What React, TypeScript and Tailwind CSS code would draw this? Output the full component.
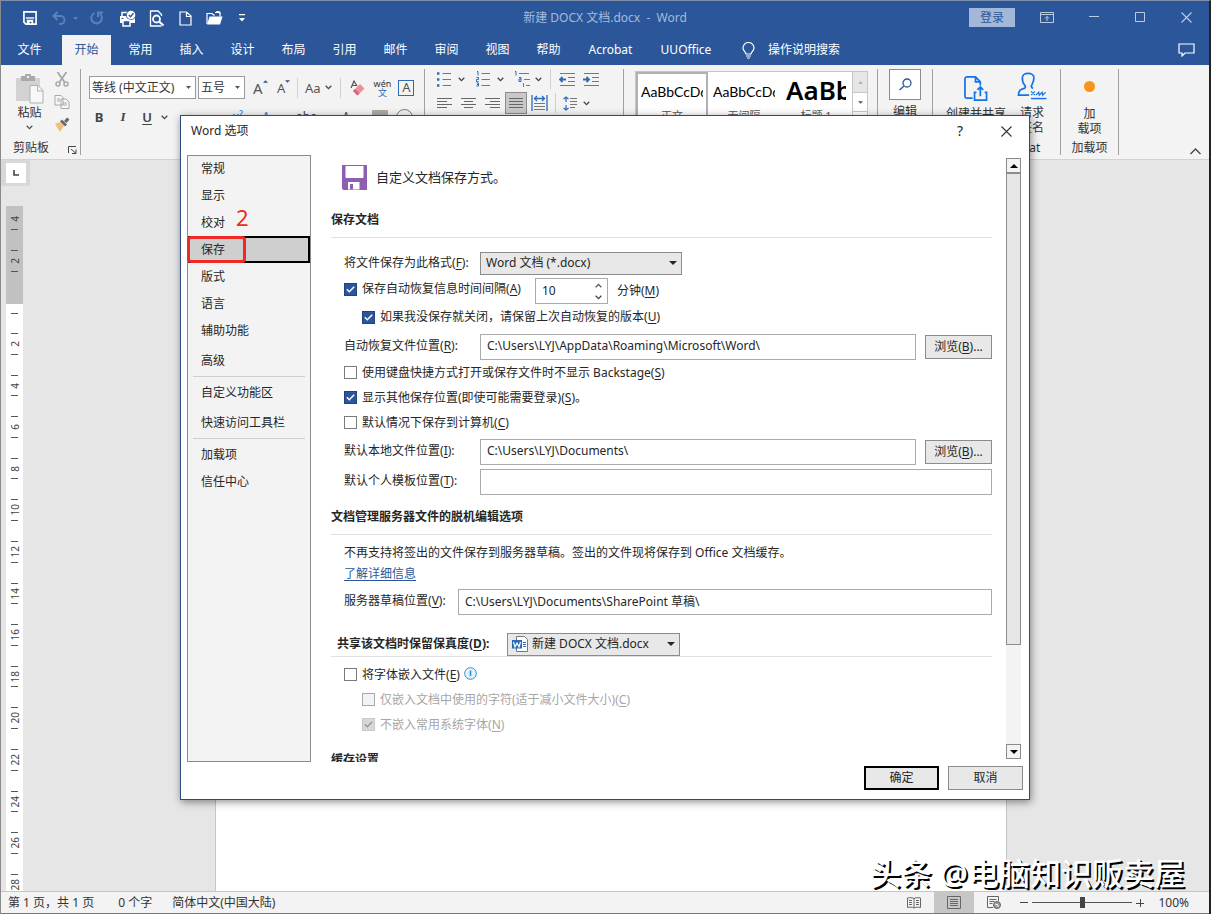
import React, { useState } from 'react';
import clsx from 'clsx';

type IconProps = { className?: string };

/* ---------- small glyphs ---------- */

function Chevron({ className = 'text-[#444]' }: IconProps) {
  return (
    <svg className={clsx('shrink-0', className)} width="7" height="5" viewBox="0 0 7 5" fill="none" stroke="currentColor" strokeWidth="1.3">
      <path d="M.7.8 3.5 3.6 6.3.8" />
    </svg>
  );
}

function Triangle({ className, up = false }: IconProps & { up?: boolean }) {
  return (
    <svg className={clsx('shrink-0', className)} width="8" height="4" viewBox="0 0 8 4" fill="currentColor">
      <path d={up ? 'M0 4 4 0 8 4Z' : 'M0 0h8L4 4Z'} />
    </svg>
  );
}

function SmallTriangle({ className = 'text-[#555]' }: IconProps) {
  return (
    <svg className={clsx('shrink-0', className)} width="5" height="3" viewBox="0 0 5 3" fill="currentColor">
      <path d="M0 0h5L2.5 3Z" />
    </svg>
  );
}

/* ---------- title bar ---------- */

function QuickAccess() {
  const btn = 'flex h-6 items-center justify-center';
  return (
    <div className="flex items-center pl-[15px] text-white">
      <button aria-label="保存" className={clsx(btn, 'w-7')}>
        <svg width="14" height="14" viewBox="0 0 15 15" fill="none">
          <path d="M1 1h13v13H3L1 12Z" stroke="currentColor" strokeWidth="1.8" />
          <path d="M3 7.5h9" stroke="currentColor" strokeWidth="1.5" />
          <path d="M4 9.5h7V14H9v-2.5H7V14H4Z" fill="currentColor" />
        </svg>
      </button>
      <button aria-label="撤消" className={clsx(btn, 'ml-[5px] w-5 text-[#5c80b8]')}>
        <svg width="14" height="14" viewBox="0 0 14 14" fill="none" stroke="currentColor" strokeWidth="2">
          <path d="M5.5 1 1.5 5l4 4M2 5h6.5a4 4 0 0 1 0 8H7" />
        </svg>
      </button>
      <button aria-label="撤消选项" className={clsx(btn, 'w-3')}>
        <SmallTriangle className="text-[#5c80b8]" />
      </button>
      <button aria-label="重复" className={clsx(btn, 'ml-1 w-6 text-[#5c80b8]')}>
        <svg width="14" height="14" viewBox="0 0 14 14" fill="none" stroke="currentColor" strokeWidth="2">
          <path d="M4.5 2.2A5.3 5.3 0 1 0 10 3M8 6V1.5h5" />
        </svg>
      </button>
      <button aria-label="快速打印" className={clsx(btn, 'ml-[6px] w-6')}>
        <svg width="17" height="17" viewBox="0 0 17 17" fill="none">
          <path d="M1 6h11l4 1v6H1Z" fill="currentColor" />
          <path d="M3 6V2.5h6" stroke="currentColor" strokeWidth="1.5" />
          <circle cx="12" cy="5" r="5" fill="#2b579a" />
          <circle cx="12" cy="5" r="4.3" fill="currentColor" />
          <path d="m9.8 5 1.7 1.7 3-3.4" stroke="#2b579a" strokeWidth="1.3" />
          <path d="M4 10.5h7V16H4Z" fill="#2b579a" stroke="currentColor" strokeWidth="1.5" />
          <path d="M2.5 8.5h2" stroke="#2b579a" />
        </svg>
      </button>
      <button aria-label="打印预览" className={clsx(btn, 'ml-1 w-7')}>
        <svg width="16" height="17" viewBox="0 0 16 17" fill="none" stroke="currentColor">
          <path d="M12.5 6V4.5L9 1H1.5v15h11" strokeWidth="1.3" />
          <circle cx="7.5" cy="9" r="3.5" strokeWidth="1.8" />
          <path d="m10 11.5 4.5 4" strokeWidth="2.2" />
        </svg>
      </button>
      <button aria-label="新建" className={clsx(btn, 'w-7')}>
        <svg width="13" height="15" viewBox="0 0 13 15" fill="none" stroke="currentColor" strokeWidth="1.2">
          <path d="M1 1h6.5L12 5v9H1ZM7.5 1v4.5H12" />
        </svg>
      </button>
      <button aria-label="打开" className={clsx(btn, 'ml-px w-7')}>
        <svg width="17" height="14" viewBox="0 0 17 14" fill="none">
          <path d="M1 13V2.5h5L7.5 4H9M14 5.5v-4H9" stroke="currentColor" strokeWidth="1.2" />
          <path d="M3.5 5.5h13L14 13.5H1Z" fill="currentColor" />
          <path d="m10 1 3-1 1 3" stroke="currentColor" />
        </svg>
      </button>
      <button aria-label="自定义快速访问工具栏" className={clsx(btn, 'w-7')}>
        <svg width="6" height="8" viewBox="0 0 6 8">
          <path d="M0 0h6v1.3H0ZM0 4h6L3 7.5Z" fill="currentColor" />
        </svg>
      </button>
    </div>
  );
}

function TitleBar() {
  return (
    <header className="relative flex h-[34px] shrink-0 items-center justify-between bg-[#2b579a]">
      <QuickAccess />
      <h1 className="pointer-events-none absolute inset-x-0 text-center text-[12px] font-normal whitespace-pre text-[#a5bbdd]">
        新建 DOCX 文档.docx  -  Word
      </h1>
      <div className="flex items-center pb-[2px] text-[#bccbe4]">
        <button className="mr-[10px] h-[19px] w-[46px] bg-[#a3b8d9] text-[12px] leading-[19px] text-[#2b579a]">登录</button>
        <button aria-label="功能区显示选项" className="flex h-8 w-[46px] items-center justify-center pr-[2px]">
          <svg width="14" height="11" viewBox="0 0 14 11" fill="none" stroke="currentColor">
            <path d="M.5.5h13v10H.5ZM.5 2.5h13M7 9V4.5M5 6.5l2-2 2 2" />
          </svg>
        </button>
        <button aria-label="最小化" className="flex h-8 w-[46px] items-center justify-center">
          <svg width="10" height="2" viewBox="0 0 10 2" stroke="currentColor"><path d="M0 .5h10" /></svg>
        </button>
        <button aria-label="最大化" className="flex h-8 w-[46px] items-center justify-center">
          <svg width="10" height="10" viewBox="0 0 10 10" fill="none" stroke="currentColor"><path d="M.5.5h9v9h-9Z" /></svg>
        </button>
        <button aria-label="关闭" className="flex h-8 w-[46px] items-center justify-center">
          <svg width="11" height="11" viewBox="0 0 11 11" stroke="currentColor" strokeWidth="1.1"><path d="m.5.5 10 10M10.5.5l-10 10" /></svg>
        </button>
      </div>
    </header>
  );
}

function Tabs() {
  const tab = 'flex h-[30px] w-[51px] items-center justify-center';
  return (
    <nav className="flex h-[30px] shrink-0 items-center bg-[#2b579a] pr-[9px] text-[12px] text-white">
      <button className="mr-1 flex h-[30px] w-[57px] items-center justify-center">文件</button>
      <button className="mr-1 flex h-[30px] w-[49px] items-center justify-center bg-[#f3f3f3] text-[#2b579a]">开始</button>
      {['常用', '插入', '设计', '布局', '引用', '邮件', '审阅', '视图', '帮助'].map((t) => (
        <button key={t} className={tab}>{t}</button>
      ))}
      <button className="flex h-[30px] w-[73px] items-center justify-center">Acrobat</button>
      <button className="flex h-[30px] w-[78px] items-center justify-center">UUOffice</button>
      <button className="ml-[17px] flex h-[30px] items-center gap-[13px]">
        <svg width="13" height="17" viewBox="0 0 13 17" fill="none" stroke="currentColor" strokeWidth="1.2">
          <path d="M4 12c0-2-3-3-3-6a5.4 5.4 0 0 1 11 0c0 3-3 4-3 6ZM4 14h5M5 16h3" />
        </svg>
        操作说明搜索
      </button>
      <button aria-label="批注" className="ml-auto flex h-[30px] w-7 items-center justify-center">
        <svg width="17" height="14" viewBox="0 0 17 14" fill="none" stroke="currentColor" strokeWidth="1.2">
          <path d="M1 1h15v9H7l-3 3v-3H1Z" />
        </svg>
      </button>
    </nav>
  );
}

/* ---------- ribbon ---------- */

function ClipboardGroup() {
  return (
    <section className="flex w-[80px] shrink-0 flex-col border-r border-[#a0a0a0]">
      <div className="flex flex-1">
        <button className="flex w-[53px] flex-col items-center pt-[5px] pl-[4px] text-[12px] leading-[16px]">
          <svg width="28" height="31" viewBox="0 0 28 31" fill="none">
            <path d="M0 4h24v23H0Z" fill="#d2d2d2" />
            <path d="M5 2h4a3 3 0 0 1 6 0h4v5H5Z" fill="#a9a9a9" />
            <circle cx="12" cy="3" r="1.2" fill="#f3f3f3" />
            <path d="M14 11.5h8l5 5V29H14Z" fill="#f7f7f7" stroke="#b0b0b0" />
            <path d="M21.5 11.5V17H27" stroke="#b0b0b0" />
          </svg>
          粘贴
          <Chevron className="mt-1 text-[#555]" />
        </button>
        <div className="flex flex-col items-center gap-2 pt-[3px]">
          <button aria-label="剪切">
            <svg width="14" height="15" viewBox="0 0 14 15" fill="none" stroke="#a8a8a8" strokeWidth="1.8">
              <path d="m2.5 0 7 10M11.5 0l-7 10" />
              <circle cx="3" cy="12" r="2" strokeWidth="1.5" /><circle cx="11" cy="12" r="2" strokeWidth="1.5" />
            </svg>
          </button>
          <button aria-label="复制">
            <svg width="16" height="14" viewBox="0 0 16 14" fill="#f7f7f7" stroke="#a8a8a8">
              <path d="M1 .5h6l2 2V10H1ZM7 4h5l3 3v6.5H7ZM3 4h3M3 6h3M9 8h4M9 10h4" />
            </svg>
          </button>
          <button aria-label="格式刷">
            <svg width="16" height="15" viewBox="0 0 16 15">
              <path d="m1 7 5-2 4 4-4 6Z" fill="#f2c078" />
              <path d="m6 4.5 2-2 5 5-2 2Z" fill="#686868" />
              <path d="m10 4 3-3.500 2.500 2L12.500 6Z" fill="#686868" />
            </svg>
          </button>
        </div>
      </div>
      <div className="flex items-center gap-[19px] pl-3 text-[12px] leading-[14px]">
        剪贴板
        <svg className="mt-1 shrink-0" width="9" height="8" viewBox="0 0 9 8" fill="none" stroke="#444">
          <path d="M.5 7V.5H8M3 3l5 4.500M8 3.500v4H4" />
        </svg>
      </div>
    </section>
  );
}

function FontGroup() {
  const low = 'text-center text-[12px] leading-[20px]';
  return (
    <section className="flex w-[344px] shrink-0 flex-col gap-2 border-r border-[#a0a0a0] pt-[7px] pl-2">
      <div className="flex items-center">
        <button className="mr-[2px] flex h-[23px] w-[107px] items-center justify-between border border-[#9a9a9a] bg-white pr-1 pl-[2px] text-[12px]">
          等线 (中文正文) <SmallTriangle />
        </button>
        <button className="flex h-[23px] w-[47px] items-center justify-between border border-[#9a9a9a] bg-white pr-1 pl-[2px] text-[12px]">
          五号 <SmallTriangle />
        </button>
        <div className="ml-2 flex items-center text-[15px] leading-[20px] text-[#555]">
          <button className="flex w-6 items-start">A<Triangle up className="mt-[2px] h-[3px] w-[5px] text-[#2b579a]" /></button>
          <button className="flex w-5 items-start text-[13px]">A<Triangle className="mt-[2px] h-[3px] w-[5px] text-[#2b579a]" /></button>
          <span className="h-5 border-r border-[#d0d0d0]" />
          <button className="ml-[7px] flex items-center gap-1 text-[13px]">Aa <Chevron /></button>
          <span className="ml-2 h-5 border-r border-[#d0d0d0]" />
          <button aria-label="清除所有格式" className="ml-[9px]">
            <svg width="16" height="16" viewBox="0 0 16 16" fill="none">
              <path d="m1 8 3-7 3 5M2.500 5.500h4" stroke="#555" strokeWidth="1.2" />
              <path d="m3 11 7-7 4.500 4.500-7 7Z" fill="#ee8d9b" />
              <path d="m3 11 2-2 4.500 4.500-2 2Z" fill="#d96577" />
            </svg>
          </button>
          <button className="ml-2 flex flex-col items-center text-[9px] leading-[9px] text-[#333]">wén<span className="text-[#2b6cb8]">文</span></button>
          <button className="ml-[7px] flex h-[16px] w-[16px] items-center justify-center border border-[#2b6cb8] text-[13px] leading-none">A</button>
        </div>
      </div>
      <div className="flex h-5 items-center text-[13px] leading-[20px] text-[#444]">
        <button className="w-6 pr-1 font-bold">B</button>
        <button className="w-6 pr-1 font-['Liberation_Serif'] font-bold italic">I</button>
        <button className="w-6 pr-1 font-semibold underline underline-offset-2">U</button>
        <Chevron />
        <button className={clsx(low, 'ml-[58px] w-6 text-[#2b6cb8]')}>x²</button>
        <button className={clsx(low, 'ml-1 w-6 text-[#2b6cb8]')}>A</button>
        <button className={clsx(low, 'ml-4 w-6')}>abc</button>
        <button className={clsx(low, 'ml-4 w-6')}>A</button>
        <span className="mt-[2px] ml-[14px] h-4 w-4 shrink-0 bg-[#aaa]" />
        <button aria-label="带圈字符" className="ml-2 size-[17px] shrink-0 rounded-full border border-[#777]" />
      </div>
    </section>
  );
}

function Lines({ rows, className = 'text-[#666]' }: { rows: number[][]; className?: string }) {
  return (
    <svg className={clsx('shrink-0', className)} width="16" height="13" viewBox="0 0 16 13" stroke="currentColor">
      {rows.map(([a, b], i) => <path key={i} d={`M${a} ${i * 3 + 1.5}H${b}`} />)}
    </svg>
  );
}

function ListIcon({ kind }: { kind: 'bullet' | 'number' | 'multi' }) {
  return (
    <svg className="shrink-0" width="17" height="16" viewBox="0 0 17 16" fill="none" stroke="#777">
      {kind !== 'multi' && <path d="M5.5 2.500H14M5.5 8.500H14M5.5 14.500H14" />}
      {kind === 'bullet' && <path d="M0 2.500h2.400M0 8.500h2.400M0 14.500h2.400" stroke="#2b6cb8" strokeWidth="2.4" />}
      {kind === 'number' && <path d="M1 .5h1v4M.5 6.500h2v2h-2v2h2M.5 12h2v3h-2M1 13.500h1" stroke="#2b6cb8" />}
      {kind === 'multi' && (
        <>
          <path d="M5 2.500h10M10 8.500h6M12 14.500h4" />
          <path d="M1 .5h1v4M5 6.500h2v4H5V8h2" stroke="#2b6cb8" />
          <path d="M9.500 12v4" />
        </>
      )}
    </svg>
  );
}

function IndentIcon({ flip = false }: { flip?: boolean }) {
  return (
    <svg className="shrink-0" width="17" height="13" viewBox="0 0 17 13" fill="none" stroke="#777">
      <path d="M1 .5h15M9 4.500h7M9 8.500h7M1 12.500h15" />
      <path d={flip ? 'M0 6.500h6M3.500 4 6 6.500 3.500 9' : 'M7 6.500H1M3.500 4 1 6.500 3.500 9'} stroke="#2b6cb8" strokeWidth="1.8" />
    </svg>
  );
}

function ParagraphGroup() {
  return (
    <section className="flex w-[199px] shrink-0 flex-col gap-1 border-r border-[#a0a0a0] pt-[1px] pl-3">
      <div className="flex h-[18px] items-center">
        <ListIcon kind="bullet" /><Chevron className="ml-1 text-[#444]" />
        <span className="w-[11px]" />
        <ListIcon kind="number" /><Chevron className="ml-1 text-[#444]" />
        <span className="w-[10px]" />
        <ListIcon kind="multi" /><Chevron className="ml-1 text-[#444]" />
        <span className="mx-2 h-5 border-r border-[#d0d0d0]" />
        <IndentIcon /><span className="w-[7px]" /><IndentIcon flip />
      </div>
      <div className="flex h-[22px] items-center">
        <Lines rows={[[0, 15], [0, 10], [0, 15], [0, 10]]} />
        <span className="w-2" />
        <Lines rows={[[0, 15], [3, 12], [0, 15], [3, 12]]} />
        <span className="w-2" />
        <Lines rows={[[0, 15], [5, 15], [0, 15], [5, 15]]} />
        <span className="ml-1 flex h-[22px] w-[22px] items-center justify-center border border-[#8c8c8c] bg-[#c8c8c8]">
          <Lines rows={[[1, 15], [1, 15], [1, 15], [1, 15]]} />
        </span>
        <svg className="ml-1" width="17" height="17" viewBox="0 0 17 17" fill="none" stroke="#777">
          <path d="M3 8.500h11M3 11.500h11M3 14.500h11" />
          <path d="M1 0v16M16 0v16M4 3.500h9M6 1 3.500 3.500 6 6M11 1l2.500 2.500L11 6" stroke="#2b6cb8" strokeWidth="1.3" />
        </svg>
        <span className="mx-[7px] h-5 border-r border-[#d0d0d0]" />
        <svg width="14" height="15" viewBox="0 0 14 15" fill="none" stroke="#777">
          <path d="M7 2.500h7M7 5.500h7M7 8.500h7M7 11.500h5" />
          <path d="M3 1v5M.5 3 3 1l2.500 2M3 9v5M.5 12 3 14l2.500-2" stroke="#2b6cb8" strokeWidth="1.2" />
        </svg>
        <Chevron className="ml-[6px] text-[#444]" />
      </div>
    </section>
  );
}

function StylesGroup() {
  return (
    <section className="flex w-[254px] shrink-0 border-r border-[#a0a0a0] pt-[2px] pl-[11px]">
      <div className="flex h-[64px] w-[233px] border border-[#c6c6c6] bg-white text-[11px] text-[#555]">
        <button className="flex w-[72px] shrink-0 flex-col overflow-hidden border-2 border-[#b0b0b0] px-[3px] text-left">
          <span className="h-8 w-full overflow-hidden font-[Lato] text-[14px] leading-[36px] text-black">AaBbCcDd</span>
          <span className="w-full text-center leading-[20px]">正文</span>
        </button>
        <button className="flex w-[72px] shrink-0 flex-col overflow-hidden px-[5px] pt-[2px] text-left">
          <span className="h-8 w-full overflow-hidden font-[Lato] text-[14px] leading-[36px] text-black">AaBbCcDd</span>
          <span className="w-full text-center leading-[20px] whitespace-nowrap">无间隔</span>
        </button>
        <button className="flex w-[72px] shrink-0 flex-col overflow-hidden px-[6px] pt-[2px] text-left">
          <span className="h-8 w-full overflow-hidden text-[26px] leading-[32px] font-semibold text-black">AaBb</span>
          <span className="w-full text-center leading-[20px] whitespace-nowrap">标题 1</span>
        </button>
        <div className="flex flex-1 flex-col border-l border-[#c6c6c6]">
          <button aria-label="上一行" className="flex h-[20px] items-center justify-center bg-[#e6e6e6] text-[#aaa]"><Triangle up className="h-[3px] w-[5px]" /></button>
          <button aria-label="下一行" className="flex h-[20px] items-center justify-center border-y border-[#c6c6c6] text-[#555]"><Triangle className="h-[3px] w-[5px]" /></button>
          <button aria-label="其他" className="flex-1" />
        </div>
      </div>
    </section>
  );
}

function Ribbon() {
  return (
    <div className="flex h-[95px] shrink-0 border-b border-[#d2d2d2] bg-[#f3f3f3] pt-1 pb-1 text-[#333]">
      <ClipboardGroup />
      <FontGroup />
      <ParagraphGroup />
      <StylesGroup />
      <section className="flex w-[55px] shrink-0 justify-center border-r border-[#a0a0a0]">
        <button className="flex flex-col items-center text-[12px]">
          <span className="flex h-[31px] w-[32px] items-center justify-center border border-[#8c8c8c] bg-white">
            <svg width="13" height="13" viewBox="0 0 13 13" fill="none" stroke="#2b579a" strokeWidth="1.3">
              <circle cx="8" cy="5" r="4" /><path d="m5 8-4.500 4" />
            </svg>
          </span>
          <span className="pt-[3px] leading-[18px]">编辑</span>
        </button>
      </section>
      <section className="flex w-[128px] shrink-0 flex-col border-r border-[#a0a0a0] text-[12px] leading-[15px]">
        <div className="flex flex-1">
          <button className="flex w-[86px] flex-col items-center gap-[5px] pt-[7px]">
            <svg width="24" height="25" viewBox="0 0 25 26" fill="none" stroke="#1473e6" strokeWidth="1.8">
              <path d="M9 23H3a2 2 0 0 1-2-2V3a2 2 0 0 1 2-2h9l5 5v4M12 1v5h5" />
              <path d="M13 17h-2v8h12.500v-8h-2M17 21v-9M14 14.500l3-3 3 3" />
            </svg>
            创建并共享
          </button>
          <button className="-ml-1 flex w-[40px] flex-col items-center gap-[5px] pt-[3px] pr-[6px]">
            <svg width="32" height="28" viewBox="0 0 32 29" fill="none" stroke="#1473e6" strokeWidth="1.8">
              <path d="M13 24H2c0-5 2-6 6-7 2-1 1-3 0-4-2-2-2-5-2-7 0-6 12-6 12 0 0 3-1 5-2 7-1 1-1 3 1 4" />
              <path d="M15 27.500h16" strokeWidth="1.5" />
              <path d="m15 20 4 4M19 20l-4 4M20 24l3-3 .5 3 3-3 .5 3 3-3" strokeWidth="1.2" />
            </svg>
            <span>请求<br />签名</span>
          </button>
        </div>
        <span className="pl-[44px] text-center leading-[14px]">Acrobat</span>
      </section>
      <section className="flex w-[58px] shrink-0 flex-col items-center border-r border-[#a0a0a0] text-[12px] leading-[15px]">
        <button className="flex flex-1 flex-col items-center pt-3">
          <svg width="11" height="11" viewBox="0 0 12 12"><circle cx="6" cy="6" r="6" fill="#f7941e" /></svg>
          <span className="pt-[14px]">加<br />载项</span>
        </button>
        <span className="leading-[14px]">加载项</span>
      </section>
      <button aria-label="折叠功能区" className="mr-2 ml-auto self-end">
        <svg width="11" height="7" viewBox="0 0 11 7" fill="none" stroke="#444" strokeWidth="1.3"><path d="m.5 6 5-5 5 5" /></svg>
      </button>
    </div>
  );
}

/* ---------- document area ---------- */

function Tick() {
  return <span className="h-px w-[7px] shrink-0 bg-[#555]" />;
}

function RulerNumber({ n }: { n: number }) {
  return <span className="rotate-180 text-[10px] leading-[14px] [writing-mode:vertical-rl]">{n}</span>;
}

function Ruler() {
  const marks = Array.from({ length: 14 }, (_, i) => (i + 1) * 2);
  return (
    <div className="ml-[5px] flex w-[17px] flex-1 flex-col overflow-hidden bg-white text-[#444]">
      <div className="flex h-[98px] shrink-0 flex-col items-center bg-[#c1c1c1]">
        <div className="flex h-[34px] flex-col items-center justify-end gap-[7px] pb-[10px]"><RulerNumber n={4} /><Tick /></div>
        <div className="flex h-[42px] flex-col items-center justify-between py-[10px]"><Tick /><RulerNumber n={2} /><Tick /></div>
        <div className="pt-[10px]"><Tick /></div>
      </div>
      <div className="flex h-[19px] shrink-0 flex-col items-center pt-[9px]"><Tick /></div>
      {marks.map((n, i) => (
        <div key={n} className={clsx('flex shrink-0 flex-col items-center justify-between py-[10px]', i % 5 === 1 || i % 5 === 3 ? 'h-[41px]' : 'h-[42px]')}>
          <Tick />
          <RulerNumber n={n} />
          <Tick />
        </div>
      ))}
    </div>
  );
}

function DocumentArea() {
  return (
    <main className="relative flex min-h-0 flex-1 bg-[#e6e6e6]">
      <div className="flex w-[29px] shrink-0 flex-col">
        <div className="mb-5 flex h-[26px] w-[29px] shrink-0 items-center justify-center bg-[#d8d8d8]">
          <div className="flex size-[20px] items-center justify-center bg-white">
            <svg width="6" height="6" viewBox="0 0 6 6" fill="none" stroke="#444" strokeWidth="1.6"><path d="M1 0v5h5" /></svg>
          </div>
        </div>
        <Ruler />
      </div>
      <div className="flex min-w-0 flex-1 justify-center pt-8 pr-[17px]">
        <div className="w-[792px] border-x border-[#c6c6c6] bg-white" />
      </div>
      <p className="absolute right-[24px] -bottom-[2px] text-[31px] leading-[40px] font-medium whitespace-nowrap text-white [text-shadow:2px_2px_0_#000]">
        头条 @电脑知识贩卖屋
      </p>
    </main>
  );
}

function StatusBar() {
  return (
    <footer className="flex h-[23px] shrink-0 items-center border-t border-b border-t-[#c6c6c6] border-b-[#777] bg-[#f3f3f3] text-[12px] text-[#333]">
      <span className="ml-[7px]">第 1 页，共 1 页</span>
      <span className="ml-6">0 个字</span>
      <span className="ml-5">简体中文(中国大陆)</span>
      <div className="ml-auto flex h-full items-center text-[#666]">
        <button aria-label="阅读视图" className="flex h-full w-[40px] items-center justify-center">
          <svg width="14" height="12" viewBox="0 0 14 12" fill="none" stroke="currentColor">
            <path d="M.5 1C3 .5 5 .5 7 1.500 9 .5 11 .5 13.500 1v9.500C11 10 9 10 7 11 5 10 3 10 .5 10.500ZM7 1.500V11M2 3.500h3M2 5.500h3M2 7.500h3M9 3.500h3M9 5.500h3M9 7.500h3" />
          </svg>
        </button>
        <button aria-label="页面视图" className="flex h-full w-[40px] items-center justify-center bg-[#c6c6c6]">
          <svg width="14" height="13" viewBox="0 0 14 13" fill="none" stroke="currentColor">
            <path d="M.5.5h13v12H.5ZM3 3.500h8M3 5.500h8M3 7.500h8M3 9.500h8" />
          </svg>
        </button>
        <button aria-label="Web 版式视图" className="flex h-full w-[40px] items-center justify-center">
          <svg width="14" height="13" viewBox="0 0 14 13" fill="none" stroke="currentColor">
            <path d="M6 11.500H.5v-11h11V5M2.500 3.500h7M2.500 5.500h5M2.500 7.500h3" />
            <circle cx="10" cy="9" r="3.500" fill="#999" /><path d="m8 8 3 1v2" stroke="#fff" />
          </svg>
        </button>
        <button aria-label="缩小" className="ml-[6px] flex h-full w-3 items-center">
          <svg width="8" height="2" viewBox="0 0 8 2" stroke="#444"><path d="M0 .5h8" /></svg>
        </button>
        <input
          type="range"
          aria-label="缩放"
          defaultValue={50}
          className="h-4 w-[100px] appearance-none bg-[linear-gradient(#555,#555)] bg-[length:100%_1px] bg-center bg-no-repeat [&::-webkit-slider-thumb]:h-[11px] [&::-webkit-slider-thumb]:w-[5px] [&::-webkit-slider-thumb]:appearance-none [&::-webkit-slider-thumb]:bg-[#444]"
        />
        <button aria-label="放大" className="ml-1 flex h-full w-2 items-center">
          <svg width="8" height="8" viewBox="0 0 8 8" stroke="#444"><path d="M0 4.500h8M4.500 0v8" /></svg>
        </button>
        <span className="mr-[20px] ml-[14px] text-[#333]">100%</span>
      </div>
    </footer>
  );
}

/* ---------- dialog ---------- */

function Key({ k }: { k: string }) {
  return <>(<span className="underline underline-offset-2">{k}</span>)</>;
}

function Check({ id, label, k, after, checked, disabled, className }: {
  id: string; label: string; k: string; after?: string; checked?: boolean; disabled?: boolean; className?: string;
}) {
  return (
    <div className={clsx('flex shrink-0 items-center gap-[5px]', className)}>
      <span className="grid shrink-0 place-items-center">
        <input
          id={id}
          type="checkbox"
          defaultChecked={checked}
          disabled={disabled}
          className="peer size-[13px] appearance-none border border-[#7a7a7a] bg-white [grid-area:1/1] checked:border-[#1e4480] checked:bg-[#2b579a] disabled:border-[#a8a8a8] disabled:bg-[#f3f3f3] disabled:checked:border-[#c8c8c8] disabled:checked:bg-[#d8d8d8]"
        />
        <svg className="pointer-events-none hidden text-white [grid-area:1/1] peer-checked:block peer-disabled:text-[#999]" width="9" height="7" viewBox="0 0 9 7" fill="none" stroke="currentColor" strokeWidth="1.5">
          <path d="m.8 3.200 2.500 2.500L8.200.8" />
        </svg>
      </span>
      <label htmlFor={id} className={clsx('whitespace-nowrap', disabled && 'text-[#a6a6a6]')}>
        {label}<Key k={k} />{after}
      </label>
    </div>
  );
}

function PathRow({ id, label, k, value, browse, narrow, className }: {
  id: string; label: string; k: string; value: string; browse?: boolean; narrow?: boolean; className?: string;
}) {
  return (
    <div className={clsx('flex h-[26px] shrink-0 items-center pl-[13px]', className)}>
      <label htmlFor={id} className={clsx('shrink-0 pb-[2px] whitespace-nowrap', narrow ? 'w-[114px]' : 'w-[136px]')}>{label}<Key k={k} />:</label>
      <input id={id} type="text" defaultValue={value} className="h-[26px] min-w-0 flex-1 border border-[#ababab] bg-white px-[6px] pb-[3px]" />
      {browse && (
        <button className="ml-[9px] h-[24px] w-[67px] shrink-0 border border-[#8c8c8c] bg-[#e8e8e8]">
          浏览<Key k="B" />...
        </button>
      )}
    </div>
  );
}

const NAV_GROUPS = [
  ['常规', '显示', '校对', '保存', '版式', '语言', '辅助功能', '高级'],
  ['自定义功能区', '快速访问工具栏'],
  ['加载项', '信任中心'],
];

function OptionsNav() {
  const [active, setActive] = useState('保存');
  return (
    <nav className="relative w-[124px] shrink-0 bg-[#f3f3f3] px-px ring-1 ring-[#8c8c8c] ring-inset">
      {NAV_GROUPS.map((group, g) => (
        <div key={g} className={clsx(g > 0 && 'mx-[5px] mt-[2px] border-t border-[#cfcfcf] pt-[2px]')}>
          {group.map((item) => (
            <button
              key={item}
              onClick={() => setActive(item)}
              className={clsx(
                'flex h-[27px] w-full items-center border-2 text-left',
                g > 0 ? 'pl-[6px]' : 'pl-[11px]',
                (item === '高级' || item === '快速访问工具栏') && 'mt-[3px]',
                item === active ? 'border-black bg-[#cfcfcf]' : 'border-transparent',
              )}
            >
              {item}
            </button>
          ))}
        </div>
      ))}
      <span className="pointer-events-none absolute top-[81px] left-0 h-[27px] w-[59px] rounded-[4px] border-[3px] border-[#f02a22]" />
      <span className="pointer-events-none absolute top-[49px] left-[49px] text-[22px] leading-[26px] text-[#f02a22]">2</span>
    </nav>
  );
}

function SaveOptions() {
  return (
    <div className="ml-5 flex min-w-0 flex-1 flex-col overflow-hidden">
      <div className="flex h-[44px] shrink-0 items-center gap-[9px] pl-[11px] text-[13px]">
        <svg width="25" height="25" viewBox="0 0 25 25">
          <path d="M0 0h25v25H1.500L0 23.500Z" fill="#8e5fb0" />
          <path d="M3.500 1h18v11a1 1 0 0 1-1 1h-16a1 1 0 0 1-1-1Z" fill="#fff" />
          <path d="M6 17h11.500v7.500H6Z" fill="#fff" />
          <path d="M8 19h3v5.500H8Z" fill="#8e5fb0" />
        </svg>
        自定义文档保存方式。
      </div>
      <h3 className="flex h-[39px] shrink-0 items-center border-b border-[#e1e1e1] pt-[3px] font-bold">保存文档</h3>

      <div className="mt-3 flex h-[26px] shrink-0 items-center pl-[13px]">
        <label htmlFor="format" className="w-[136px] shrink-0">将文件保存为此格式<Key k="F" />:</label>
        <span className="grid w-[202px] items-center">
          <select id="format" className="h-[23px] appearance-none border border-[#8c8c8c] bg-[#e8e8e8] px-[5px] [grid-area:1/1]">
            <option>Word 文档 (*.docx)</option>
          </select>
          <Triangle className="pointer-events-none mr-[5px] justify-self-end [grid-area:1/1]" />
        </span>
      </div>

      <div className="mt-px flex h-[28px] shrink-0 items-center pl-[13px]">
        <Check id="autosave" label="保存自动恢复信息时间间隔" k="A" checked className="pb-1" />
        <div className="ml-[14px] flex h-[26px] w-[73px] border border-[#ababab] bg-white">
          <input id="minutes" type="text" defaultValue="10" className="min-w-0 flex-1 bg-transparent px-[6px]" />
          <div className="flex w-4 flex-col items-center justify-around text-[#555]">
            <button aria-label="增加"><Chevron className="rotate-180" /></button>
            <button aria-label="减少"><Chevron /></button>
          </div>
        </div>
        <label htmlFor="minutes" className="ml-[9px]">分钟<Key k="M" /></label>
      </div>
      <Check id="keep" label="如果我没保存就关闭，请保留上次自动恢复的版本" k="U" checked className="h-[24px] pl-[31px]" />
      <PathRow id="recover" label="自动恢复文件位置" k="R" value="C:\Users\LYJ\AppData\Roaming\Microsoft\Word\" browse className="mt-[5px]" />
      <Check id="backstage" label="使用键盘快捷方式打开或保存文件时不显示 Backstage" k="S" className="h-[25px] pl-[13px]" />
      <Check id="others" label="显示其他保存位置(即使可能需要登录)" k="S" after="。" checked className="h-[25px] pl-[13px]" />
      <Check id="computer" label="默认情况下保存到计算机" k="C" className="h-[25px] pl-[13px]" />
      <PathRow id="local" label="默认本地文件位置" k="I" value="C:\Users\LYJ\Documents\" browse className="mt-1" />
      <PathRow id="template" label="默认个人模板位置" k="T" value="" className="mt-1" />

      <h3 className="mt-[5px] flex h-[35px] shrink-0 items-center border-b border-[#e1e1e1] font-bold">文档管理服务器文件的脱机编辑选项</h3>
      <p className="mt-[7px] h-[22px] shrink-0 pl-[13px] leading-[22px]">
        不再支持将签出的文件保存到服务器草稿。签出的文件现将保存到 Office 文档缓存。
      </p>
      <p className="h-[20px] shrink-0 pl-[13px] leading-[20px]">
        <a href="#details" className="text-[#2b579a] underline underline-offset-2">了解详细信息</a>
      </p>
      <PathRow id="drafts" label="服务器草稿位置" k="V" value="C:\Users\LYJ\Documents\SharePoint 草稿\" narrow className="mt-[5px]" />

      <div className="mt-[17px] flex h-[25px] shrink-0 items-center border-b border-[#e1e1e1] pl-[6px]">
        <label htmlFor="fidelity" className="w-[170px] font-bold">共享该文档时保留保真度<Key k="D" />:</label>
        <span className="grid w-[173px] items-center">
          <select id="fidelity" className="h-[23px] appearance-none border border-[#8c8c8c] bg-[#e8e8e8] pl-6 [grid-area:1/1]">
            <option>新建 DOCX 文档.docx</option>
          </select>
          <svg className="pointer-events-none ml-[5px] [grid-area:1/1]" width="16" height="16" viewBox="0 0 16 16" fill="none">
            <path d="M4.500.5h8L15.500 3.500v12h-11Z" fill="#fff" stroke="#777" />
            <path d="M11 6.500h3M11 8.500h3M11 10.500h3" stroke="#2b6cb8" />
            <path d="M0 4h10v8.500H0Z" fill="#2b6cb8" />
            <path d="m1.500 6 1.500 5 2-4 2 4 1.500-5" stroke="#fff" strokeWidth="1.2" />
          </svg>
          <Triangle className="pointer-events-none mr-[5px] justify-self-end [grid-area:1/1]" />
        </span>
      </div>
      <div className="mt-[5px] flex h-[25px] shrink-0 items-center gap-1 pl-[13px]">
        <Check id="embed" label="将字体嵌入文件" k="E" />
        <svg className="mb-[3px]" width="13" height="13" viewBox="0 0 13 13" fill="none" stroke="#2b8fd0">
          <circle cx="6.500" cy="6.500" r="5.800" fill="#e8f4fc" /><path d="M6.500 3.500V9" strokeWidth="1.6" />
        </svg>
      </div>
      <Check id="used" label="仅嵌入文档中使用的字符(适于减小文件大小)" k="C" disabled className="h-[25px] pl-[31px]" />
      <Check id="common" label="不嵌入常用系统字体" k="N" checked disabled className="h-[25px] pl-[31px]" />
      <h3 className="mt-[11px] flex h-[24px] shrink-0 items-center font-bold">缓存设置</h3>
    </div>
  );
}

function ScrollBar() {
  const end = 'flex h-[15px] shrink-0 items-center justify-center border border-[#8c8c8c] bg-[#f3f3f3]';
  return (
    <div className="mt-[3px] mr-2 mb-[3px] ml-[14px] flex w-[15px] shrink-0 flex-col bg-[#f3f3f3] text-black">
      <button aria-label="向上滚动" className={end}><Triangle up /></button>
      <div className="h-[472px] border border-[#8c8c8c] bg-[#e6e6e6]" />
      <button aria-label="向下滚动" className={clsx(end, 'mt-auto')}><Triangle /></button>
    </div>
  );
}

function OptionsDialog() {
  return (
    <div className="pointer-events-none absolute inset-0 flex items-start justify-center pt-[114px]">
      <div
        role="dialog"
        aria-labelledby="dialog-title"
        className="pointer-events-auto flex w-[850px] max-w-full flex-col border border-[#2b4a80] bg-white text-[12px] leading-[18px] text-[#262626] shadow-[1px_2px_8px_rgba(0,0,0,0.45)]"
      >
        <div className="flex h-[39px] shrink-0 items-start justify-between pt-[6px] pl-[10px]">
          <h2 id="dialog-title" className="font-normal">Word 选项</h2>
          <div className="flex">
            <button aria-label="帮助" className="w-[46px] text-[14px]">?</button>
            <button aria-label="关闭" className="flex w-[46px] items-center justify-center">
              <svg width="11" height="11" viewBox="0 0 11 11" stroke="#333" strokeWidth="1.1"><path d="m.5.5 10 10M10.5.5l-10 10" /></svg>
            </button>
          </div>
        </div>
        <div className="flex h-[607px] pl-[6px]">
          <OptionsNav />
          <SaveOptions />
          <ScrollBar />
        </div>
        <div className="flex justify-end gap-[9px] pt-1 pr-[6px] pb-[9px]">
          <button className="h-[24px] w-[75px] border-2 border-black bg-[#e8e8e8] leading-[18px]">确定</button>
          <button className="h-[24px] w-[75px] border border-[#8c8c8c] bg-[#e8e8e8] leading-[18px]">取消</button>
        </div>
      </div>
    </div>
  );
}

export default function App() {
  return (
    <div className="relative flex h-screen flex-col overflow-hidden border-t border-r-2 border-l border-t-[#7d8fa8] border-r-[#222] border-l-[#8a8a8a] bg-[#e6e6e6] font-['Noto_Sans','Noto_Sans_CJK_SC',sans-serif]">
      <TitleBar />
      <Tabs />
      <Ribbon />
      <DocumentArea />
      <StatusBar />
      <OptionsDialog />
    </div>
  );
}
